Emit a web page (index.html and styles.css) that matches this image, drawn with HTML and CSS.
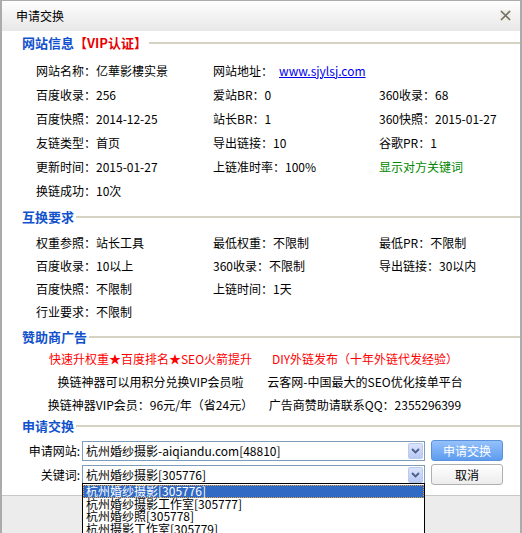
FILE: index.html
```html
<!DOCTYPE html>
<html lang="zh-CN">
<head>
<meta charset="utf-8">
<title>申请交换</title>
<link rel="stylesheet" href="styles.css">
</head>
<body>
<div class="dialog">
  <div class="titlebar">
    <span class="title">申请交换</span>
    <svg class="close" width="11" height="11" viewBox="0 0 11 11"><rect width="11" height="11" fill="#efece0"/><path d="M1 1L10 10M10 1L1 10" stroke="#6e6e6e" stroke-width="1.6"/></svg>
  </div>
  <div class="content">
    <div class="sec-head first"><span class="sec-title">网站信息<span class="vip">【VIP认证】</span></span><span class="rule"></span></div>
    <div class="grid info">
      <div>网站名称：亿華影樓实景</div>
      <div class="span2">网站地址：<a class="link" href="#">www.sjylsj.com</a></div>
      <div>百度收录：256</div><div>爱站BR：0</div><div>360收录：68</div>
      <div>百度快照：2014-12-25</div><div>站长BR：1</div><div>360快照：2015-01-27</div>
      <div>友链类型：首页</div><div>导出链接：10</div><div>谷歌PR：1</div>
      <div>更新时间：2015-01-27</div><div>上链准时率：100%</div><div class="green">显示对方关键词</div>
      <div>换链成功：10次</div>
    </div>

    <div class="sec-head gap5"><span class="sec-title">互换要求</span><span class="rule"></span></div>
    <div class="grid req">
      <div>权重参照：站长工具</div><div>最低权重：不限制</div><div>最低PR：不限制</div>
      <div>百度收录：10以上</div><div>360收录：不限制</div><div>导出链接：30以内</div>
      <div>百度快照：不限制</div><div>上链时间：1天</div><div></div>
      <div>行业要求：不限制</div>
    </div>

    <div class="sec-head gap4"><span class="sec-title">赞助商广告</span><span class="rule"></span></div>
    <div class="ads">
      <div class="red">快速升权重★百度排名★SEO火箭提升</div><div class="red">DIY外链发布（十年外链代发经验）</div>
      <div>换链神器可以用积分兑换VIP会员啦</div><div>云客网-中国最大的SEO优化接单平台</div>
      <div>换链神器VIP会员：96元/年（省24元）</div><div>广告商赞助请联系QQ：2355296399</div>
    </div>

    <div class="sec-head"><span class="sec-title">申请交换</span><span class="rule"></span></div>
    <div class="form">
      <label class="lbl">申请网站:</label>
      <div class="select"><span class="sel-text">杭州婚纱摄影-aiqiandu.com[48810]</span><span class="arrow"><svg width="9" height="6" viewBox="0 0 9 6"><path d="M1 1L4.5 4.5L8 1" fill="none" stroke="#4a5f8a" stroke-width="1.8"/></svg></span></div>
      <button class="btn primary">申请交换</button>
      <label class="lbl">关键词:</label>
      <div class="select"><span class="sel-text">杭州婚纱摄影[305776]</span><span class="arrow"><svg width="9" height="6" viewBox="0 0 9 6"><path d="M1 1L4.5 4.5L8 1" fill="none" stroke="#4a5f8a" stroke-width="1.8"/></svg></span></div>
      <button class="btn">取消</button>
    </div>
  </div>
  <div class="footer"></div>
  <ul class="dropdown">
    <li class="active">杭州婚纱摄影[305776]</li>
    <li>杭州婚纱摄影工作室[305777]</li>
    <li>杭州婚纱照[305778]</li>
    <li>杭州摄影工作室[305779]</li>
  </ul>
</div>
</body>
</html>
```
FILE: styles.css
```css
html, body {
  margin: 0;
  padding: 0;
  background: #fff;
}
body {
  font-family: "Noto Sans CJK SC", "Noto Sans", sans-serif;
  font-size: 12px;
  color: #000;
}
.dialog {
  position: relative;
  width: 522px;
  height: 533px;
  box-sizing: border-box;
  border: 2px solid #ababab;
  border-top: 1px solid #ababab;
  border-bottom: 0;
  background: #fff;
  overflow: hidden;
  display: flex;
  flex-direction: column;
}
.titlebar {
  height: 30px;
  flex: none;
  display: flex;
  align-items: center;
  justify-content: space-between;
  padding: 0 9px 1px 14px;
  box-sizing: border-box;
  background: linear-gradient(#fefefe, #e7e7e7);
}
.title {
  font-size: 12px;
  line-height: 14px;
}
.close {
  display: block;
}
.content {
  flex: none;
}
.sec-head {
  display: flex;
  align-items: center;
  height: 20px;
  padding-left: 20px;
}
.sec-head.first { margin-top: 2px; }
.sec-head.gap5 { margin-top: 5px; }
.sec-head.gap4 { margin-top: 4px; }
.sec-title {
  color: #1152cc;
  font-weight: bold;
  font-size: 13px;
  line-height: 20px;
}
.vip {
  color: #e80000;
}
.rule {
  flex: 1;
  height: 2px;
  margin-left: 2px;
  background: #d6d3c5;
}
.grid {
  display: grid;
  grid-template-columns: 177px 166px 1fr;
  align-items: center;
  padding-left: 34px;
}
.grid > div {
  white-space: nowrap;
}
.info {
  grid-auto-rows: 24px;
  margin-top: 5px;
}
.req {
  grid-auto-rows: 23px;
  margin-top: 4px;
}
.span2 {
  grid-column: span 2;
}
.link {
  color: #0000ee;
  text-decoration: underline;
  margin-left: 6px;
}
.green {
  color: #008800;
}
.ads {
  display: grid;
  grid-template-columns: 229px 200px;
  grid-auto-rows: 23px;
  align-items: center;
  padding-left: 34px;
  text-align: center;
}
.ads > div {
  white-space: nowrap;
}
.red {
  color: #ff0000;
}
.form {
  display: grid;
  grid-template-columns: 56px 343px 72px;
  grid-template-rows: 21px 21px;
  column-gap: 2px;
  row-gap: 3px;
  padding-left: 22px;
  margin-top: 4px;
  align-items: center;
}
.form .btn {
  margin-left: 4px;
}
.lbl {
  text-align: right;
  font-size: 12px;
  white-space: nowrap;
}
.select {
  height: 20px;
  box-sizing: border-box;
  border: 1px solid #7f9db9;
  background: #fff;
  display: flex;
  align-items: center;
  justify-content: space-between;
}
.sel-text {
  padding-left: 3px;
  font-size: 12px;
  line-height: 16px;
  white-space: nowrap;
}
.arrow {
  width: 15px;
  height: 16px;
  margin-right: 1px;
  box-sizing: border-box;
  border: 1px solid #b9c9ef;
  border-radius: 2px;
  background: linear-gradient(#dbe4fb, #b7c8f4);
  display: flex;
  align-items: center;
  justify-content: center;
}
.btn {
  height: 21px;
  width: 72px;
  box-sizing: border-box;
  border: 1px solid #b0b0b0;
  border-radius: 3px;
  background: linear-gradient(#ffffff, #ececec);
  font-family: "Noto Sans CJK SC", sans-serif;
  font-size: 12px;
  color: #000;
  padding: 0;
  line-height: 17px;
}
.btn.primary {
  border-color: #5b90da;
  background: linear-gradient(#94c1fa, #5e9cf0);
  color: #fff;
}
.footer {
  flex: 1;
  margin-top: 10px;
  border-top: 1px solid #c8c8c8;
  background: #ececec;
}
.dropdown {
  position: absolute;
  left: 80px;
  top: 482px;
  width: 343px;
  height: 60px;
  box-sizing: border-box;
  margin: 0;
  padding: 1px 0 0;
  list-style: none;
  border: 1px solid #000;
  background: #fff;
}
.dropdown li {
  height: 12.5px;
  line-height: 12.5px;
  padding-left: 3px;
  font-size: 12px;
  white-space: nowrap;
}
.dropdown li.active {
  background: #316ac5;
  color: #fff;
  outline: 1px dotted #e5a040;
  outline-offset: -1px;
}
```
